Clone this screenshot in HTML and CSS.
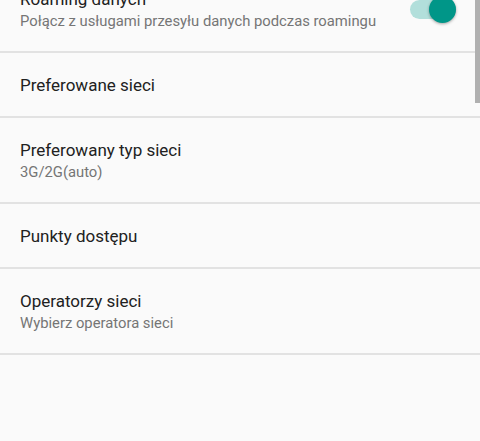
FILE: index.html
```html
<!DOCTYPE html>
<html lang="pl">
<head>
<meta charset="utf-8">
<link rel="stylesheet" href="styles.css">
</head>
<body>
<div class="list">
  <div class="row two">
    <div class="text">
      <div class="title">Roaming danych</div>
      <div class="summary">Połącz z usługami przesyłu danych podczas roamingu</div>
    </div>
    <div class="switch"><span class="track"></span><span class="thumb"></span></div>
  </div>
  <div class="row one">
    <div class="text"><div class="title">Preferowane sieci</div></div>
  </div>
  <div class="row two">
    <div class="text">
      <div class="title">Preferowany typ sieci</div>
      <div class="summary">3G/2G(auto)</div>
    </div>
  </div>
  <div class="row one">
    <div class="text"><div class="title">Punkty dostępu</div></div>
  </div>
  <div class="row two">
    <div class="text">
      <div class="title">Operatorzy sieci</div>
      <div class="summary">Wybierz operatora sieci</div>
    </div>
  </div>
</div>
<div class="scrollbar"></div>
</body>
</html>
```
FILE: styles.css
```css
html, body {
  margin: 0;
  padding: 0;
  background: #fafafa;
  height: 100%;
  overflow: hidden;
}
body {
  font-family: Roboto, "Noto Sans", sans-serif;
  position: relative;
}
.list {
  margin-top: -33px;
  display: flex;
  flex-direction: column;
}
.row {
  display: flex;
  align-items: center;
  padding: 0 24px 0 20px;
  border-bottom: 2px solid #e2e2e2;
  box-sizing: content-box;
}
.row.one { height: 63px; }
.row.two { height: 84px; }
.text {
  flex: 1;
  display: flex;
  flex-direction: column;
}
.title {
  font-size: 17px;
  line-height: 24px;
  color: #212121;
}
.summary {
  font-size: 14.8px;
  line-height: 20px;
  color: #757575;
}
.switch {
  position: relative;
  width: 46px;
  height: 27px;
}
.track {
  position: absolute;
  left: 0;
  right: 0;
  top: 4px;
  height: 19px;
  border-radius: 10px;
  background: #b2dfdb;
}
.thumb {
  position: absolute;
  right: 0;
  top: 0;
  width: 27px;
  height: 27px;
  border-radius: 50%;
  background: #009688;
  box-shadow: 0 1px 3px rgba(0,0,0,0.35);
}
.scrollbar {
  position: absolute;
  right: 0;
  top: 0;
  width: 5px;
  height: 103px;
  background: #b0b0b0;
}
```
